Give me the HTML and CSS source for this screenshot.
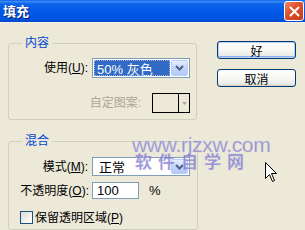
FILE: index.html
```html
<!DOCTYPE html>
<html lang="zh-CN">
<head>
<meta charset="utf-8">
<title>填充</title>
<link rel="stylesheet" href="styles.css">
</head>
<body>
<div class="window">
  <div class="titlebar">
    <span class="title">填充</span>
    <span class="close">
      <svg width="11" height="11" viewBox="0 0 11 11"><path d="M1.5 1.5 L9.5 9.5 M9.5 1.5 L1.5 9.5" stroke="#fff" stroke-width="2" stroke-linecap="round"/></svg>
    </span>
  </div>
  <div class="body">
    <div class="groups">
      <fieldset class="group g1">
        <legend>内容</legend>
        <div class="row r-use">
          <span class="lbl">使用(<u>U</u>):</span>
          <div class="combo">
            <span class="val selected">50% 灰色</span>
            <span class="drop"><svg width="9" height="6" viewBox="0 0 9 6"><path d="M1 1 L4.5 4.5 L8 1" fill="none" stroke="#4D6185" stroke-width="2"/></svg></span>
          </div>
        </div>
        <div class="row r-pattern">
          <span class="lbl disabled">自定图案:</span>
          <div class="swatch"><span class="sw-fill"></span><span class="sw-btn"><svg width="5" height="3" viewBox="0 0 5 3"><path d="M0 0 H5 L2.5 3 Z" fill="#ACA899"/></svg></span></div>
        </div>
      </fieldset>
      <fieldset class="group g2">
        <legend>混合</legend>
        <div class="row r-mode">
          <span class="lbl">模式(<u>M</u>):</span>
          <div class="combo">
            <span class="val">正常</span>
            <span class="drop"><svg width="9" height="6" viewBox="0 0 9 6"><path d="M1 1 L4.5 4.5 L8 1" fill="none" stroke="#4D6185" stroke-width="2"/></svg></span>
          </div>
        </div>
        <div class="row r-opacity">
          <span class="lbl">不透明度(<u>O</u>):</span>
          <span class="input">100</span>
          <span class="pct">%</span>
        </div>
        <div class="row r-check">
          <span class="checkbox"></span>
          <span class="chk-lbl">保留透明区域(<u>P</u>)</span>
        </div>
      </fieldset>
    </div>
    <div class="buttons">
      <span class="btn default">好</span>
      <span class="btn">取消</span>
    </div>
  </div>
  <div class="watermark">
    <span class="wm-url">www.rjzxw.com</span>
    <span class="wm-cn">软件自学网</span>
  </div>
  <svg class="cursor" width="13" height="21" viewBox="0 0 13 21"><path d="M0.5 0.5 L0.5 16.5 L4.5 12.5 L7.5 19.5 L9.5 18.5 L6.5 11.5 L11.5 11.5 Z" fill="#fff" stroke="#000" stroke-width="1" stroke-linejoin="miter"/></svg>
</div>
</body>
</html>
```

FILE: styles.css
```css
* { box-sizing: border-box; }
html, body { margin: 0; padding: 0; }
body {
  width: 305px;
  height: 230px;
  overflow: hidden;
  background: #ECE9D8;
  font-family: "Liberation Sans", "Noto Sans CJK SC", sans-serif;
  font-size: 12px;
  color: #000;
}
.window {
  position: relative;
  width: 305px;
  height: 230px;
  background: #ECE9D8;
}
.titlebar {
  height: 23px;
  display: flex;
  align-items: center;
  justify-content: space-between;
  padding: 0 1px 0 3px;
  background: linear-gradient(180deg, #0A5EE8 0%, #3B8CF5 6%, #0D62EA 18%, #0258E6 55%, #0055E0 85%, #0046CC 100%);
  border-bottom: 1px solid #F4F2EA;
}
.title {
  color: #fff;
  font-weight: bold;
  font-size: 13px;
  line-height: 15px;
  text-shadow: 1px 1px 0 #0A1E6E;
}
.close {
  width: 20px;
  height: 20px;
  display: flex;
  align-items: center;
  justify-content: center;
  border: 1px solid #fff;
  border-radius: 3px;
  background: linear-gradient(135deg, #EE8A6A 0%, #E0542E 40%, #C7381A 100%);
}
.body {
  display: flex;
}
.groups {
  padding-left: 8px;
  padding-top: 13px;
  width: 198px;
}
.group {
  margin: 0;
  padding: 0;
  border: 1px solid #D0D0BF;
  border-radius: 3px;
  min-width: 0;
}
.group legend {
  margin-left: 13px;
  padding: 0 3px;
  color: #0046D5;
  line-height: 14px;
  font-size: 12px;
}
.g1 { width: 189px; padding-bottom: 6px; }
.g2 { width: 190px; margin-top: 14px; padding-bottom: 5px; }
.row {
  display: flex;
  align-items: center;
}
.lbl {
  line-height: 14px;
  white-space: nowrap;
}
.r-use { margin-top: 8px; height: 20px; }
.r-use .lbl, .r-mode .lbl { width: 79px; text-align: right; }
.r-opacity .lbl { width: 80px; text-align: right; }
.combo {
  margin-left: 4px;
  width: 98px;
  height: 20px;
  border: 1px solid #7F9DB9;
  background: #fff;
  display: flex;
  align-items: stretch;
  padding: 1px;
}
.val {
  flex: 1;
  display: flex;
  align-items: center;
  padding-left: 3px;
  font-size: 13px;
  white-space: nowrap;
}
.val.selected {
  background: #316AC5;
  color: #fff;
  outline: 1px dotted #9DB5E0;
  outline-offset: -1px;
}
.drop {
  width: 17px;
  margin-left: 1px;
  display: flex;
  align-items: center;
  justify-content: center;
  border: 1px solid #B9CDF9;
  border-radius: 2px;
  background: linear-gradient(180deg, #E6EEFE 0%, #C5D6FC 50%, #B3C9F8 100%);
}
.r-pattern {
  margin-top: 15px;
  height: 20px;
  justify-content: flex-end;
  padding-right: 6px;
}
.disabled { color: #ACA899; margin-right: 11px; }
.swatch {
  width: 38px;
  height: 20px;
  border: 1px solid #000;
  display: flex;
}
.sw-fill { flex: 1; border-right: 1px solid #000; }
.sw-btn {
  width: 10px;
  display: flex;
  align-items: center;
  justify-content: center;
}
.r-mode { margin-top: 9px; height: 19px; }
.r-mode .combo { height: 19px; }
.r-mode .val { padding-left: 5px; }
.r-opacity { margin-top: 6px; height: 17px; }
.input {
  margin-left: 3px;
  width: 47px;
  height: 17px;
  border: 1px solid #7F9DB9;
  background: #fff;
  display: flex;
  align-items: center;
  padding-left: 4px;
  font-size: 13px;
}
.pct { margin-left: 10px; font-size: 13px; }
.r-check { margin-top: 12px; height: 13px; padding-left: 11px; }
.checkbox {
  width: 13px;
  height: 13px;
  border: 1px solid #1C5180;
  background: linear-gradient(135deg, #DCDBD5 0%, #F2F2EE 60%, #fff 100%);
}
.chk-lbl { margin-left: 2px; line-height: 14px; }
.buttons {
  margin-left: 19px;
  padding-top: 18px;
  display: flex;
  flex-direction: column;
  gap: 10px;
}
.btn {
  width: 79px;
  height: 18px;
  border: 1px solid #003C74;
  border-radius: 3px;
  background: linear-gradient(180deg, #FFFFFF 0%, #F7F7F4 50%, #ECEBE6 85%, #D6D0C5 100%);
  display: flex;
  align-items: center;
  justify-content: center;
  font-size: 12px;
}
.btn.default {
  box-shadow: inset 0 0 0 1px #B9CDF5, inset 0 -1px 0 1px #8CB0F0;
}
.watermark {
  position: absolute;
  left: 132px;
  top: 135px;
  display: flex;
  flex-direction: column;
  pointer-events: none;
}
.wm-url {
  font-family: "Liberation Sans", sans-serif;
  font-size: 21px;
  line-height: 19px;
  letter-spacing: -0.3px;
  color: rgba(115, 110, 195, 0.72);
  -webkit-text-stroke: 0.5px rgba(205, 205, 240, 0.7);
}
.wm-cn {
  font-size: 17px;
  font-weight: bold;
  line-height: 18px;
  letter-spacing: 6px;
  margin-left: 3px;
  color: rgba(115, 110, 195, 0.72);
  -webkit-text-stroke: 0.5px rgba(205, 205, 240, 0.7);
}
.cursor {
  position: absolute;
  left: 265px;
  top: 162px;
}
```
